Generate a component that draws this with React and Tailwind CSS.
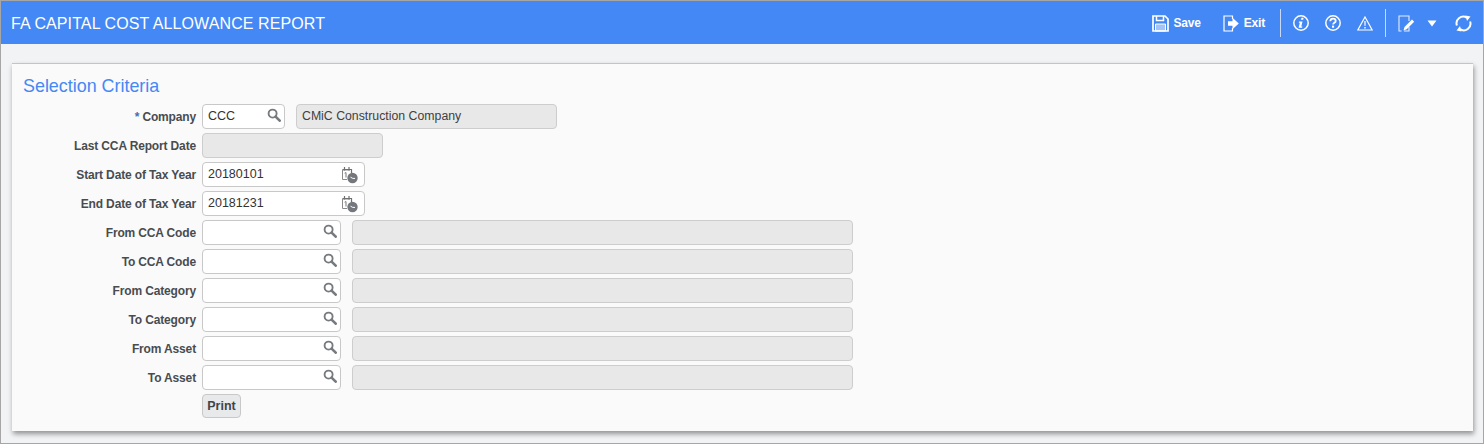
const font = { fontFamily: '"Liberation Sans", Arial, sans-serif' };

function SearchIcon() {
  return (
    <svg width="14" height="14" viewBox="0 0 15 15" fill="none" className="absolute right-[3px] top-[3px]">
      <circle cx="6" cy="6" r="4.3" stroke="#777b7f" strokeWidth="2" />
      <path d="M9.2 9.2 L13.6 13.6" stroke="#777b7f" strokeWidth="2.8" strokeLinecap="round" />
    </svg>
  );
}

function CalIcon() {
  return (
    <svg width="18" height="18" viewBox="0 0 18 18" fill="none" className="absolute right-[5px] top-[3px]">
      <path d="M9 4H1.5V13.5H6" stroke="#8a8a8a" strokeWidth="1" />
      <path d="M3.5 1V4.5M8 1V4.5M1.5 3.5H10.5V7" stroke="#707070" strokeWidth="1.2" />
      <path d="M3.6 7.2L5 6.6V11.5" stroke="#777" strokeWidth="1" />
      <circle cx="11.5" cy="12" r="5.2" fill="#74787c" />
      <path d="M9.5 11.2L11.8 12.4H14" stroke="#fff" strokeWidth="1" />
    </svg>
  );
}

function Row({ label, children, star }) {
  return (
    <div className="flex items-center h-[25px]">
      <div className="w-[185px] text-right text-[12px] font-bold text-[#484c50] pr-[1px] leading-none whitespace-nowrap tracking-[-0.15px]">
        {star && <span className="text-[#3f6fb5]">* </span>}
        {label}
      </div>
      <div className="ml-[5px] flex items-center">{children}</div>
    </div>
  );
}

function Input({ w, value, icon }) {
  return (
    <div className={`relative ${w} h-[25px] bg-white border border-[#c8c8c8] rounded-[4px] pl-[5px] text-[12.5px] leading-[22px] text-[#333]`}>
      {value}
      {icon === "search" && <SearchIcon />}
      {icon === "cal" && <CalIcon />}
    </div>
  );
}

function Disabled({ w, ml, value }) {
  return (
    <div className={`${w} ${ml} h-[25px] bg-[#e8e8e8] border border-[#cdcdcd] rounded-[4px] pl-[5px] text-[12.3px] leading-[22px] text-[#404040]`}>
      {value}
    </div>
  );
}

function Lookup({ label }) {
  return (
    <Row label={label}>
      <Input w="w-[139px]" icon="search" />
      <Disabled w="w-[501px]" ml="ml-[11px]" />
    </Row>
  );
}

function Tool({ children, label }) {
  return (
    <div className="flex items-center gap-[5px] text-white text-[12px] font-bold tracking-[-0.2px]">
      {children}
      {label && <span>{label}</span>}
    </div>
  );
}

function Header() {
  return (
    <div className="h-[43px] bg-[#4488f5] flex items-center pl-[10px] pr-[11px]">
      <div className="text-white text-[16px] tracking-[0.1px] whitespace-nowrap pt-[2px]">FA CAPITAL COST ALLOWANCE REPORT</div>
      <div className="ml-auto flex items-center pt-[1px]">
        <Tool label="Save">
          <svg width="17" height="17" viewBox="0 0 17 17" fill="none">
            <path d="M1 1H13L16 4V16H1Z" stroke="#fff" strokeWidth="1.7" />
            <path d="M4.5 1V5.5H11.5V1" stroke="#fff" strokeWidth="1.5" />
            <path d="M3.5 9H13.5V16H3.5Z" fill="#fff" fillOpacity="0.5" stroke="#fff" />
          </svg>
        </Tool>
        <div className="w-[22px]" />
        <Tool label="Exit">
          <svg width="16" height="17" viewBox="0 0 16 17" fill="none">
            <path d="M9.5 4V1H1V16H9.5V13" stroke="#fff" strokeWidth="1.2" />
            <path d="M5 6.2H9.5V2.8L15.8 8.5L9.5 14.2V10.8H5Z" fill="#fff" />
          </svg>
        </Tool>
        <div className="w-px h-[28px] bg-[#c7dafb] ml-[15px] mr-[12px]" />
        <svg width="16" height="16" viewBox="0 0 16 16" fill="none">
          <circle cx="8" cy="8" r="7.2" stroke="#fff" strokeWidth="1.5" />
          <path d="M8.4 2.8h2.2l-.4 2H8ZM6 6.6h3.5l-1.2 5h1.1l-.3 1.2H5.6l1.2-5.1H5.8Z" fill="#fff" />
        </svg>
        <svg width="16" height="16" viewBox="0 0 16 16" fill="none" className="ml-[16px]">
          <circle cx="8" cy="8" r="7.2" stroke="#fff" strokeWidth="1.5" />
          <path d="M5.3 6.2C5.4 4.5 6.6 3.7 8 3.7c1.7 0 2.7.9 2.7 2.2 0 2-2.6 1.9-2.6 3.7" stroke="#fff" strokeWidth="1.8" />
          <rect x="7" y="10.6" width="2.1" height="2.1" fill="#fff" />
        </svg>
        <svg width="16" height="15" viewBox="0 0 16 15" fill="none" className="ml-[16px]">
          <path d="M8 1L15.2 14H.8Z" stroke="#fff" strokeWidth="1.2" />
          <path d="M7.3 5h1.4l-.2 5H7.5ZM7.3 11h1.4v1.5H7.3Z" fill="#fff" />
        </svg>
        <div className="w-px h-[28px] bg-[#c7dafb] ml-[12px] mr-[12px]" />
        <svg width="17" height="17" viewBox="0 0 17 17" fill="none">
          <path d="M11 6V1H1V16H3.5M6 16H11V12" stroke="#fff" strokeOpacity="0.85" strokeWidth="1.1" />
          <path d="M5.5 15.5L6.5 12L14 4.5L16.2 6.7L8.7 14.2Z" fill="#fff" />
        </svg>
        <svg width="10" height="7" viewBox="0 0 10 7" className="ml-[12px]">
          <path d="M0.5 0.5H9.5L5 6.5Z" fill="#fff" />
        </svg>
        <svg width="17" height="17" viewBox="0 0 17 17" fill="none" className="ml-[18px]">
          <path d="M1.9 10.5A6.7 6.7 0 0 1 12 2.8" stroke="#fff" strokeWidth="2" />
          <path d="M15.1 6.5A6.7 6.7 0 0 1 5 14.2" stroke="#fff" strokeWidth="2" />
          <path d="M10.5 0.5L15.5 1.5L12 6Z" fill="#fff" />
          <path d="M6.5 16.5L1.5 15.5L5 11Z" fill="#fff" />
        </svg>
      </div>
    </div>
  );
}

export default function App() {
  return (
    <div style={font} className="w-[1484px] h-[444px] bg-[#f2f3f5] border border-[#a6a6a6] overflow-hidden">
      <Header />
      <div className="ml-[11px] mr-[10px] mt-[19px] h-[368px] bg-[#fafafa] border-t border-[#c4c4c4] shadow-[1px_3px_5px_rgba(0,0,0,0.4)] pt-[12px]">
        <div className="pl-[11px] text-[17.9px] leading-[20px] text-[#4488f5]">Selection Criteria</div>
        <div className="mt-[8px] flex flex-col gap-[4px]">
          <Row label="Company" star>
            <Input w="w-[83px]" value="CCC" icon="search" />
            <Disabled w="w-[261px]" ml="ml-[11px]" value="CMiC Construction Company" />
          </Row>
          <Row label="Last CCA Report Date">
            <Disabled w="w-[181px]" />
          </Row>
          <Row label="Start Date of Tax Year">
            <Input w="w-[163px]" value="20180101" icon="cal" />
          </Row>
          <Row label="End Date of Tax Year">
            <Input w="w-[163px]" value="20181231" icon="cal" />
          </Row>
          <Lookup label="From CCA Code" />
          <Lookup label="To CCA Code" />
          <Lookup label="From Category" />
          <Lookup label="To Category" />
          <Lookup label="From Asset" />
          <Lookup label="To Asset" />
          <div className="pl-[190px]">
            <button className="block w-[39px] h-[24px] bg-[#e8e9eb] border border-[#c8c8c8] rounded-[4px] text-[12.5px] font-bold text-[#404448] leading-none">Print</button>
          </div>
        </div>
      </div>
    </div>
  );
}
